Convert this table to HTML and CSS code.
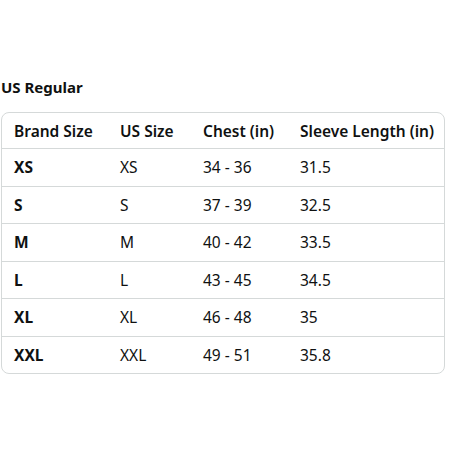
FILE: index.html
```html
<!DOCTYPE html>
<html>
<head>
<meta charset="utf-8">
<link rel="stylesheet" href="styles.css">
</head>
<body>
<section class="chart">
  <h2 class="title">US Regular</h2>
  <div class="box">
    <table class="sizes">
      <colgroup>
        <col class="c1"><col class="c2"><col class="c3"><col class="c4">
      </colgroup>
      <thead>
        <tr><th>Brand Size</th><th>US Size</th><th>Chest (in)</th><th>Sleeve Length (in)</th></tr>
      </thead>
      <tbody>
        <tr><td class="b">XS</td><td>XS</td><td>34 - 36</td><td>31.5</td></tr>
        <tr><td class="b">S</td><td>S</td><td>37 - 39</td><td>32.5</td></tr>
        <tr><td class="b">M</td><td>M</td><td>40 - 42</td><td>33.5</td></tr>
        <tr><td class="b">L</td><td>L</td><td>43 - 45</td><td>34.5</td></tr>
        <tr><td class="b">XL</td><td>XL</td><td>46 - 48</td><td>35</td></tr>
        <tr><td class="b">XXL</td><td>XXL</td><td>49 - 51</td><td>35.8</td></tr>
      </tbody>
    </table>
  </div>
</section>
</body>
</html>
```

FILE: styles.css
```css
html, body {
  margin: 0;
  padding: 0;
  background: #ffffff;
}
body {
  font-family: "Noto Sans", "Open Sans", sans-serif;
  color: #0f1111;
}
.chart {
  padding: 76px 5px 0 1px;
}
.title {
  margin: 0 0 14px 0;
  font-size: 15px;
  font-weight: 700;
  line-height: 22px;
}
.box {
  border: 1px solid #d5d9d9;
  border-radius: 8px;
  overflow: hidden;
}
.sizes {
  width: 100%;
  border-collapse: collapse;
  table-layout: fixed;
  font-size: 15.5px;
}
.c1 { width: 106px; }
.c2 { width: 83px; }
.c3 { width: 97px; }
.c4 { width: auto; }
.sizes th, .sizes td {
  text-align: left;
  padding: 0 0 0 12px;
  white-space: nowrap;
}
.sizes th {
  height: 35px;
  font-weight: 600;
  border-bottom: 1px solid #d5d9d9;
}
.sizes td {
  height: 36.5px;
  font-weight: 400;
  border-bottom: 1px solid #d5d9d9;
}
.sizes tbody tr:last-child td {
  border-bottom: none;
}
.sizes td.b {
  font-weight: 700;
}
```
